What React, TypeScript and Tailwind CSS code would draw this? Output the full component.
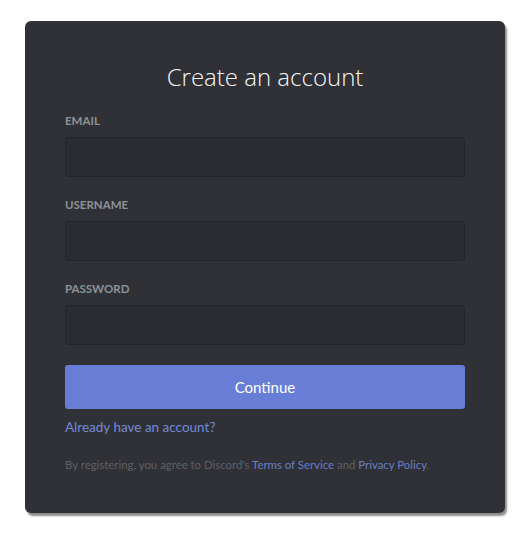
import React from "react";

export default function App() {
  const font = { fontFamily: 'Lato, "Noto Sans", sans-serif' };
  const Field = ({ label, type }: { label: string; type: string }) => (
    <div className="flex flex-col">
      <label className="text-[11.5px] leading-[16px] font-bold text-[#8e9297] mb-2">{label}</label>
      <input
        type={type}
        className="h-10 w-full rounded-[3px] border border-[#222428] bg-[#2a2c31] px-2.5 text-[16px] text-[#dcddde] outline-none"
      />
    </div>
  );
  return (
    <div className="min-h-[537px] w-[530px] bg-white pt-[21px] pl-[25px]" style={font}>
      <div className="w-[480px] rounded-[6px] bg-[#2f3136] px-10 pt-10 pb-10 shadow-[2px_3px_2px_rgba(0,0,0,0.45)]">
        <h1
          className="text-center text-[24px] leading-[32px] font-light text-[#f6f6f7]"
          style={{ fontFamily: '"Open Sans", "Noto Sans", sans-serif' }}
        >
          Create an account
        </h1>
        <div className="mt-5 flex flex-col gap-5">
          <Field label="EMAIL" type="email" />
          <Field label="USERNAME" type="text" />
          <Field label="PASSWORD" type="password" />
          <button className="h-11 w-full rounded-[3px] bg-[#687ed6] text-[15px] text-white">Continue</button>
        </div>
        <div className="mt-2 text-[13.5px] leading-[20px] text-[#7289da]">Already have an account?</div>
        <p className="mt-5 whitespace-nowrap text-[11.4px] leading-[16px] text-[#5d6066]">
          By registering, you agree to Discord's <span className="text-[#6a7dc6]">Terms of Service</span> and{" "}
          <span className="text-[#6a7dc6]">Privacy Policy</span>.
        </p>
      </div>
    </div>
  );
}
